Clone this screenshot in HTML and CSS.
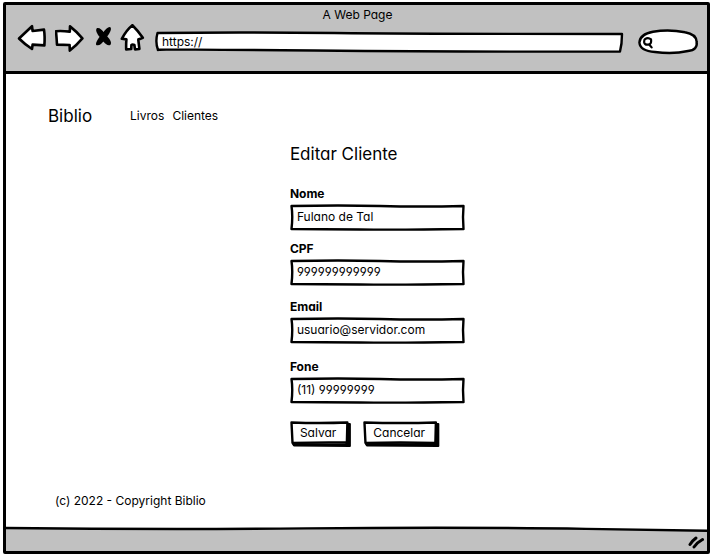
FILE: index.html
```html
<!DOCTYPE html>
<html lang="pt-BR">
<head>
<meta charset="utf-8">
<meta name="viewport" content="width=device-width, initial-scale=1">
<title>A Web Page</title>
<link rel="stylesheet" href="styles.css">
</head>
<body>
<div class="window">
  <header class="chrome">
    <div class="chrome-title">A Web Page</div>
    <div class="toolbar">
      <button class="tool" type="button" aria-label="Voltar">
        <svg width="30" height="30" viewBox="0 0 30 30"><path class="ink" d="M2 14.5 15 2.2 15.600 7 27 5.600Q28 12 27.400 21.400L15.600 20.600 15 25Q8 20.500 2 14.500Z"/></svg>
      </button>
      <button class="tool" type="button" aria-label="Avançar">
        <svg width="30" height="30" viewBox="0 0 30 30"><path class="ink" d="M1 7.2Q7 6.8 14.8 7.6L15 2.4Q21 7 27.4 14.4 22 20.8 14.8 26.6L14.6 21 2 20.6Q1.6 14 1 7.2Z"/></svg>
      </button>
      <button class="tool" type="button" aria-label="Parar">
        <svg width="22" height="30" viewBox="0 0 22 30"><path class="stop" d="M4.4 5Q7.4 4.600 10.600 10 14 4 16.800 4Q18 6 13 12.400 18.200 18 16.800 20 14.200 21 10.400 15.800 7 21 4 20.200 3.600 18.400 7.800 12.800 3 7 4.400 5Z"/></svg>
      </button>
      <button class="tool" type="button" aria-label="Início">
        <svg width="26" height="30" viewBox="0 0 26 30"><path class="ink" d="M12.400 1.200Q17.400 6 22.800 13.800L19.800 15Q18 14.600 18.400 16.600L19.400 25 15 25.400 14.400 21Q12.400 20 11.400 21.200L11.200 25 6.200 25.400Q6 20.400 6.400 15.400L1.800 14.800Q6.400 6 12.400 1.200Z"/></svg>
      </button>
      <div class="address">
        <svg class="sketch" viewBox="0 0 468 24" preserveAspectRatio="none" aria-hidden="true"><path d="M3.5 3Q80 2 180 3T467 4Q467 14 465 21.500Q320 22 160 20.5T4 20Q1 12 3.5 3Z"/></svg>
        <input class="address-input" type="text" value="https://" aria-label="Endereço">
      </div>
      <div class="search">
        <svg class="sketch" viewBox="0 0 60 24" preserveAspectRatio="none" aria-hidden="true"><path d="M15 1.700Q31-.8 47 2.200 58 4 58.600 11.500 60 20 50 21 35 24.400 17 22 2 21 1.400 12.500 2 4 15 1.700Z"/></svg>
        <svg class="lens" width="12" height="14" viewBox="0 0 12 14" aria-hidden="true"><path d="M3 3.2Q6 1 9 3.4 9.8 8.4 6 8.6 2.8 9 2.2 6.4 2 4 3 3.2ZM7.6 9 9.600 11.4"/></svg>
        <input class="search-input" type="search" aria-label="Pesquisar">
      </div>
    </div>
  </header>

  <div class="page">
    <nav class="nav">
      <a class="brand" href="#">Biblio</a>
      <div class="links">
        <a href="#">Livros</a>
        <a href="#">Clientes</a>
      </div>
    </nav>

    <main class="main">
      <h1>Editar Cliente</h1>
      <form>
        <div class="fields">
          <div class="field">
            <label for="nome">Nome</label>
            <div class="box">
              <svg class="sketch" viewBox="0 0 175 27" preserveAspectRatio="none" aria-hidden="true"><path d="M1.5 2Q50 1 90 2T173.500 2Q172.500 13 173.500 25 110 26 70 25.500T1.500 25Q3 12 1.500 2Z"/></svg>
              <input id="nome" type="text" value="Fulano de Tal">
            </div>
          </div>
          <div class="field">
            <label for="cpf">CPF</label>
            <div class="box">
              <svg class="sketch" viewBox="0 0 175 27" preserveAspectRatio="none" aria-hidden="true"><path d="M1.5 2Q50 1 90 2T173.500 2Q172.500 13 173.500 25 110 26 70 25.500T1.500 25Q3 12 1.500 2Z"/></svg>
              <input id="cpf" type="text" value="999999999999">
            </div>
          </div>
          <div class="field">
            <label for="email">Email</label>
            <div class="box">
              <svg class="sketch" viewBox="0 0 175 27" preserveAspectRatio="none" aria-hidden="true"><path d="M1.5 2Q50 1 90 2T173.500 2Q172.500 13 173.500 25 110 26 70 25.500T1.500 25Q3 12 1.500 2Z"/></svg>
              <input id="email" type="email" value="usuario@servidor.com">
            </div>
          </div>
          <div class="field">
            <label for="fone">Fone</label>
            <div class="box">
              <svg class="sketch" viewBox="0 0 175 27" preserveAspectRatio="none" aria-hidden="true"><path d="M1.5 2Q50 1 90 2T173.500 2Q172.500 13 173.500 25 110 26 70 25.500T1.500 25Q3 12 1.500 2Z"/></svg>
              <input id="fone" type="tel" value="(11) 99999999">
            </div>
          </div>
        </div>
        <div class="actions">
          <button class="btn" type="submit">
            <svg class="sketch" viewBox="0 0 60 26" preserveAspectRatio="none" aria-hidden="true"><path class="shade" d="M3 23 56 23.500 57 3 59.500 3 59.500 25 4 24.500Z"/><path d="M1.500 1.500Q30 2.500 57 1.500L56.500 21.500Q30 21 2.500 22Z"/></svg>
            <span>Salvar</span>
          </button>
          <button class="btn" type="button">
            <svg class="sketch" viewBox="0 0 77 26" preserveAspectRatio="none" aria-hidden="true"><path class="shade" d="M3 23 73 23.500 74 3 76.500 3 76.500 25 4 24.500Z"/><path d="M1.500 1.500Q38 2.500 74 1.500L73.500 22Q38 21 2.500 22Z"/></svg>
            <span>Cancelar</span>
          </button>
        </div>
      </form>
    </main>

    <footer class="copyright">(c) 2022 - Copyright Biblio</footer>
  </div>

  <div class="status">
    <svg class="status-bar" viewBox="0 0 701 26" preserveAspectRatio="none" aria-hidden="true"><path d="M-3 2Q150 4 300 2.500 460 1 580 3L704 5 704 30-3 30Z"/></svg>
    <svg class="grip" width="18" height="16" viewBox="0 0 18 16" aria-hidden="true"><path d="M2 10.500Q4.500 6.500 8 4M6 13Q9 8.500 14.500 5.500"/></svg>
  </div>
</div>
</body>
</html>
```
FILE: styles.css
```css
* {
  box-sizing: border-box;
}

body {
  margin: 0;
  padding: 2px 1px 4px 3px;
  min-height: 100vh;
  display: flex;
  background: #fff;
  color: #000;
  font: 12px/16px Inter, "Liberation Sans", sans-serif;
  font-feature-settings: "cv11", "ss01";
}

a {
  color: inherit;
  text-decoration: none;
}

button,
input {
  margin: 0;
  padding: 0;
  border: 0;
  outline: 0;
  background: none;
  color: inherit;
  font: inherit;
  font-feature-settings: inherit;
}

.window {
  flex: 1;
  display: flex;
  flex-direction: column;
  border: 3px solid #000;
  border-radius: 2px;
}

.chrome {
  padding: 2px 9px 17px 11px;
  background: #c1c1c1;
  border-bottom: 3px solid #000;
}

.chrome-title {
  margin-bottom: 1px;
  text-align: center;
}

.toolbar {
  display: flex;
  align-items: flex-end;
}

.tool {
  margin-right: 8px;
  line-height: 0;
}

.tool:nth-child(3) {
  margin-right: 5px;
}

.ink {
  fill: #fff;
  stroke: #000;
  stroke-width: 2.6;
  stroke-linejoin: round;
}

.stop {
  fill: #000;
  stroke: #000;
  stroke-width: 2;
  stroke-linejoin: round;
}

.address,
.search,
.box,
.btn {
  position: relative;
}

.sketch {
  position: absolute;
  inset: 0;
  width: 100%;
  height: 100%;
  overflow: visible;
}

.sketch path {
  fill: #fff;
  stroke: #000;
  stroke-width: 2.4;
  stroke-linejoin: round;
  vector-effect: non-scaling-stroke;
}

.sketch .shade {
  fill: #000;
  stroke-width: 2;
}

.address {
  flex: 1;
  height: 24px;
  margin-right: 15px;
}

.address-input,
.search-input,
.box input {
  position: relative;
  display: block;
  width: 100%;
  height: 100%;
}

.address-input {
  padding: 0 8px 2px;
}

.search {
  width: 60px;
  height: 24px;
}

.search-input {
  padding: 0 8px 0 18px;
}

.lens {
  position: absolute;
  left: 4px;
  top: 6px;
}

.lens path {
  fill: none;
  stroke: #000;
  stroke-width: 2.2;
  stroke-linecap: round;
}

.page {
  flex: 1;
  display: flex;
  flex-direction: column;
  padding: 30px 0 17px;
}

.nav {
  display: flex;
  align-items: center;
  padding-left: 42px;
  gap: 38px;
}

.brand {
  font-size: 17px;
  line-height: 24px;
}

.links {
  display: flex;
  gap: 8px;
}

.main {
  margin-top: 14px;
  margin-left: 40.5%;
}

h1 {
  margin: 0 0 20px;
  font-size: 17px;
  line-height: 24px;
  font-weight: 400;
}

.fields {
  display: grid;
  grid-template-rows: 55px 58px 60px auto;
  justify-content: start;
}

.field label {
  display: block;
  margin-bottom: 2px;
  font-weight: 700;
}

.box {
  width: 175px;
  height: 27px;
}

.box input {
  padding: 0 7px 2px;
}

.actions {
  display: flex;
  gap: 13px;
  margin-top: 17px;
}

.btn {
  height: 26px;
  padding: 0 14px 2px 10px;
}

.btn span {
  position: relative;
}

.copyright {
  margin-top: auto;
  padding-left: 49px;
}

.status {
  position: relative;
  display: flex;
  justify-content: flex-end;
  padding: 8px 1px 1px;
  overflow: hidden;
}

.status-bar {
  position: absolute;
  inset: 0;
  width: 100%;
  height: 100%;
}

.status-bar path {
  fill: #c1c1c1;
  stroke: #000;
  stroke-width: 2.4;
  vector-effect: non-scaling-stroke;
}

.grip {
  position: relative;
}

.grip path {
  fill: none;
  stroke: #000;
  stroke-width: 3;
  stroke-linecap: round;
}
```
